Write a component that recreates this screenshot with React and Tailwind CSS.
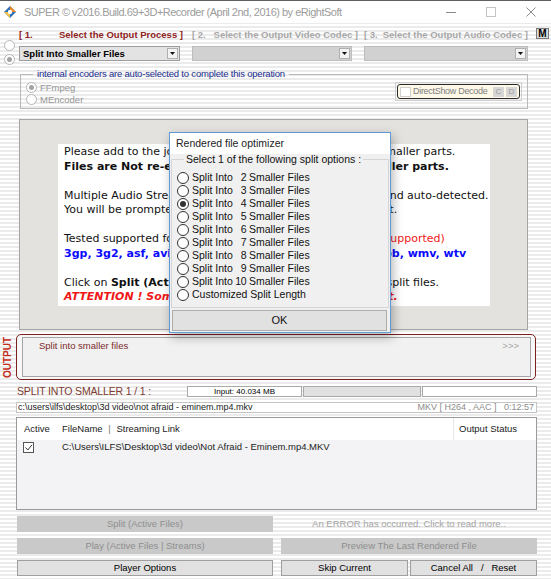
import React from "react";

const stripes =
  "bg-[repeating-linear-gradient(to_bottom,#ffffff_0px,#ffffff_2px,#ebebeb_2px,#ebebeb_4px)]";

const splitOptions = ["2", "3", "4", "5", "6", "7", "8", "9", "10"];

function SmallRadio({ checked }) {
  return (
    <span className="flex h-[11px] w-[11px] shrink-0 items-center justify-center rounded-full border border-[#b4b4b4] bg-white">
      {checked && <span className="h-[5px] w-[5px] rounded-full bg-[#a3a3a3]" />}
    </span>
  );
}

function DlgRadio({ checked }) {
  return (
    <span className="flex h-[12px] w-[12px] shrink-0 items-center justify-center rounded-full border border-[#333333] bg-white">
      {checked && <span className="h-[6px] w-[6px] rounded-full bg-[#333333]" />}
    </span>
  );
}

function Combo({ className, text, disabled }) {
  return (
    <div
      className={`flex h-[15px] items-center justify-between border ${
        disabled ? "border-[#bdbdbd] bg-[#d1d1d1]" : "border-[#9c9c9c] bg-[#e3e3e3]"
      } ${className}`}
    >
      <span className="pl-[3px] text-[9.5px] font-bold leading-none text-black">{text}</span>
      <span className="mr-[1px] flex h-[11px] w-[11px] items-center justify-center border border-[#b0b0b0] bg-[#f3f3f3]">
        <svg width="5" height="3" viewBox="0 0 5 3">
          <path d="M0 0h5L2.5 3z" fill="#111" />
        </svg>
      </span>
    </div>
  );
}

function Btn({ children, className = "", active }) {
  return (
    <div
      className={`flex h-[16px] items-center justify-center whitespace-pre text-[9.5px] ${
        active ? "border border-[#a0a0a0] bg-[#e1e1e1] text-black" : "bg-[#c9c9c9] text-[#8e8e8e]"
      } ${className}`}
    >
      {children}
    </div>
  );
}

export default function App() {
  return (
    <div
      className={`relative h-[579px] w-[551px] overflow-hidden ${stripes} font-['Liberation_Sans',Arial,sans-serif] text-black`}
    >
      {/* title bar */}
      <div className="flex h-[23px] items-center border-t border-[#5f5f5f] bg-white">
        <svg className="ml-[3px]" width="14" height="14" viewBox="0 0 14 14">
          <path d="M7 1L13 7L7 13L1 7Z" fill="#2f6db5" />
          <path d="M7 1L13 7H7Z" fill="#f08a24" />
          <path d="M1 7L7 13V7Z" fill="#f6c344" />
          <circle cx="7" cy="7" r="2.2" fill="#fff" />
        </svg>
        <span className="ml-[7px] whitespace-nowrap text-[11px] tracking-[-0.5px] text-[#9c9c9c]">
          SUPER © v2016.Build.69+3D+Recorder (April 2nd, 2016) by eRightSoft
        </span>
        <div className="ml-auto flex h-full items-center">
          <div className="flex h-full w-[40px] items-center justify-center">
            <svg width="10" height="10" viewBox="0 0 10 10">
              <path d="M0 5.5h10" stroke="#8a8a8a" />
            </svg>
          </div>
          <div className="flex h-full w-[40px] items-center justify-center">
            <svg width="10" height="10" viewBox="0 0 10 10">
              <rect x="0.5" y="0.5" width="9" height="9" fill="none" stroke="#c4c4c4" />
            </svg>
          </div>
          <div className="flex h-full w-[40px] items-center justify-center">
            <svg width="10" height="10" viewBox="0 0 10 10">
              <path d="M0.5 0.5L9.5 9.5M9.5 0.5L0.5 9.5" stroke="#8a8a8a" />
            </svg>
          </div>
        </div>
      </div>

      {/* process / codec selectors */}
      <div className="flex pt-[6px]">
        <div className="flex h-[32px] w-[19px] flex-col items-center gap-[3px] pt-[11px]">
          <SmallRadio />
          <SmallRadio checked />
        </div>
        <div className="flex flex-col">
          <div className="flex h-[11px] items-center whitespace-nowrap text-[9.5px] font-bold leading-none">
            <div className="flex w-[164px] justify-between text-[#8e2323]">
              <span>[ 1.</span>
              <span>Select the Output Process ]</span>
            </div>
            <div className="ml-[9px] flex w-[166px] justify-between text-[#a8a8a8]">
              <span>[ 2.</span>
              <span>Select the Output Video Codec ]</span>
            </div>
            <div className="ml-[6px] flex w-[164px] justify-between text-[#a8a8a8]">
              <span>[ 3.</span>
              <span>Select the Output Audio Codec ]</span>
            </div>
            <div className="-mt-[2px] ml-[8px] flex h-[11px] w-[13px] items-center justify-center border border-[#7a7a7a] bg-[#d9d9d9] text-[10px] text-black">
              M
            </div>
          </div>
          <div className="mt-[6px] flex">
            <Combo className="w-[161px]" text="Split Into Smaller Files" />
            <Combo className="ml-[12px] w-[160px]" disabled />
            <Combo className="ml-[12px] w-[164px]" disabled />
          </div>
        </div>
      </div>

      {/* encoders group */}
      <fieldset className="ml-[20px] mt-[8px] h-[40px] w-[508px] border border-[#b9b9b9] px-[5px]">
        <legend className="ml-[7px] whitespace-nowrap px-[4px] text-[9.5px] leading-[10px] tracking-[-0.2px] text-[#202c8c]">
          internal encoders are auto-selected to complete this operation
        </legend>
        <div className="flex items-start justify-between pt-[3px]">
          <div className="flex flex-col gap-[1px] text-[9.5px] leading-none text-[#979797]">
            <div className="flex h-[11px] items-center gap-[3px]">
              <SmallRadio checked />
              <span>FFmpeg</span>
            </div>
            <div className="flex h-[11px] items-center gap-[3px]">
              <SmallRadio />
              <span>MEncoder</span>
            </div>
          </div>
          <div className="flex h-[19px] w-[127px] border border-[#cfcfcf] p-[1px]">
            <div className="flex flex-1 items-center rounded-[3px] border border-[#2b2b2b] bg-[#fdf8e8] pl-[2px]">
              <span className="h-[10px] w-[11px] border border-[#d0d0d0] bg-white" />
              <span className="ml-[2px] whitespace-nowrap text-[9px] tracking-[-0.3px] text-[#7e7e7e]">
                DirectShow Decode
              </span>
              <span className="ml-auto flex h-[10px] w-[11px] items-center justify-center bg-[#d6d6d6] text-[8px] text-[#9a9a9a]">
                C
              </span>
              <span className="ml-[2px] mr-[2px] flex h-[10px] w-[11px] items-center justify-center bg-[#d6d6d6] text-[8px] text-[#9a9a9a]">
                D
              </span>
            </div>
          </div>
        </div>
      </fieldset>

      {/* info panel */}
      <div className="ml-[19px] mt-[10px] h-[211px] w-[509px] border border-[#a5a5a5] bg-[#e4e2de] pl-[38px] pt-[24px]">
        <div className="h-[162px] w-[432px] overflow-hidden bg-white px-[6px] pt-[1px] font-['DejaVu_Sans',sans-serif] text-[11px] leading-[14.5px] text-[#111]">
          <div className="whitespace-nowrap">
            Please add to the job list the file(s) you want to split into smaller parts.
          </div>
          <div className="whitespace-nowrap font-bold">
            Files are Not re-encoded, they are only cut into smaller parts.
          </div>
          <div className="h-[14.5px]" />
          <div className="whitespace-nowrap">
            Multiple Audio Streams and/or Subtitles are all supported and auto-detected.
          </div>
          <div className="whitespace-nowrap">You will be prompted to select which one to use for the split.</div>
          <div className="h-[14.5px]" />
          <div className="whitespace-nowrap">
            Tested supported formats{" "}
            <span className="text-[#f01818]">(other formats may not be fully supported)</span>
          </div>
          <div className="whitespace-nowrap font-bold text-[#0a0aff]">
            3gp, 3g2, asf, avi, flv, m2ts, mkv, mov, mp4, mpg, vob, wmv, wtv
          </div>
          <div className="h-[14.5px]" />
          <div className="whitespace-nowrap">
            Click on <span className="font-bold">Split (Active Files)</span> to start creating the smaller split
            files.
          </div>
          <div className="whitespace-nowrap font-bold italic text-[#f01818]">
            ATTENTION ! Some formats may not be properly split.
          </div>
        </div>
      </div>

      {/* output */}
      <div className="mt-[4px] flex h-[46px]">
        <div className="flex w-[16px] items-center justify-center">
          <span className="-rotate-90 whitespace-nowrap text-[10px] font-bold text-[#c22f22]">OUTPUT</span>
        </div>
        <div className="flex w-[520px] rounded-[5px] border border-[#7c2020] bg-[#f7f7f7] py-[2px] pl-[5px] pr-[4px]">
          <div className="flex flex-1 items-start justify-between border border-[#a5a5a5] bg-[#f1f1f1] pl-[16px] pr-[11px] pt-[2px] text-[9.5px] leading-[12px]">
            <span className="text-[#7b2b2b]">Split into smaller files</span>
            <span className="text-[#a5a5a5]">&gt;&gt;&gt;</span>
          </div>
        </div>
      </div>

      {/* progress row */}
      <div className="mt-[6px] flex h-[11px] items-center">
        <div className="w-[187px] whitespace-nowrap pl-[17px] text-[10.5px] tracking-[-0.15px] text-[#7d3b31]">
          SPLIT INTO SMALLER 1 / 1 :
        </div>
        <div className="flex h-[11px] w-[115px] items-center justify-center border border-[#a9a9a9] bg-white text-[8px]">
          Input: 40.034 MB
        </div>
        <div className="ml-[1px] h-[11px] w-[118px] border border-[#a9a9a9] bg-[#e1e1e1]" />
        <div className="ml-[1px] h-[11px] w-[115px] border border-[#a9a9a9] bg-white" />
      </div>

      {/* file path */}
      <div className="ml-[16px] mt-[5px] flex h-[11px] w-[521px] items-center justify-between border border-[#c4c4c4] bg-white px-[1px] text-[9px] leading-none">
        <span className="whitespace-nowrap text-[#222]">c:\users\ilfs\desktop\3d video\not afraid - eminem.mp4.mkv</span>
        <span className="whitespace-pre pr-[1px] text-[#8b8b8b]">MKV [ H264 , AAC ]   0:12:57</span>
      </div>

      {/* file list */}
      <div className="ml-[16px] mt-[4px] h-[93px] w-[521px] border border-[#9a9a9a] bg-[#f3f3f5]">
        <div className="flex h-[22px] items-center bg-white text-[9.5px] text-[#222]">
          <div className="w-[45px] pl-[7px]">Active</div>
          <div className="flex-1">
            FileName <span className="px-[3px] text-[#777]">|</span> Streaming Link
          </div>
          <div className="flex h-full w-[83px] items-center border-l border-[#e6e6e6] pl-[5px]">Output Status</div>
        </div>
        <div className="flex h-[14px] items-center text-[9.5px] text-[#222]">
          <div className="w-[45px] pl-[6px]">
            <span className="flex h-[11px] w-[11px] items-center justify-center border border-[#555] bg-white">
              <svg width="9" height="9" viewBox="0 0 9 9">
                <path d="M1.5 4.5L3.8 7L8 1.8" fill="none" stroke="#333" strokeWidth="1" />
              </svg>
            </span>
          </div>
          <div className="whitespace-nowrap">C:\Users\ILFS\Desktop\3d video\Not Afraid - Eminem.mp4.MKV</div>
        </div>
      </div>

      {/* buttons */}
      <div className="mt-[6px] flex">
        <Btn className="ml-[17px] w-[256px]">Split (Active Files)</Btn>
        <div className="ml-[8px] flex h-[16px] w-[256px] items-center justify-center text-[9.5px] text-[#a6a6a6]">
          An ERROR has occurred. Click to read more..
        </div>
      </div>
      <div className="mt-[6px] flex">
        <Btn className="ml-[17px] w-[256px]">Play (Active Files | Streams)</Btn>
        <Btn className="ml-[8px] w-[256px]">Preview The Last Rendered File</Btn>
      </div>
      <div className="mt-[6px] flex">
        <Btn active className="ml-[17px] w-[256px]">
          Player Options
        </Btn>
        <Btn active className="ml-[8px] w-[127px]">
          Skip Current
        </Btn>
        <Btn active className="ml-[2px] w-[127px]">
          {"Cancel All   /   Reset"}
        </Btn>
      </div>

      {/* modal dialog */}
      <div className="absolute left-[169px] top-[132px] flex h-[201px] w-[222px] flex-col border border-[#5e9ad6] bg-[#f0f0f0] shadow-[2px_4px_10px_rgba(0,0,0,0.3)]">
        <div className="flex h-[21px] shrink-0 items-center bg-white pl-[6px] text-[10.5px] text-[#222]">
          Rendered file optimizer
        </div>
        <fieldset className="mx-[1px] h-[154px] border border-[#d5d5d5] pl-[5px]">
          <legend className="ml-[7px] px-[2px] text-[10.5px] leading-[11px] text-[#111]">
            Select 1 of the following split options :
          </legend>
          <div className="flex flex-col pt-[6px] text-[10.5px] leading-[13px] text-[#111]">
            {splitOptions.map((n) => (
              <div key={n} className="flex h-[13px] items-center">
                <DlgRadio checked={n === "4"} />
                <span className="ml-[3px] w-[43px] whitespace-nowrap">Split Into</span>
                <span className="w-[11px] text-right tracking-[-0.5px]">{n}</span>
                <span className="ml-[3px] whitespace-nowrap">Smaller Files</span>
              </div>
            ))}
            <div className="flex h-[13px] items-center">
              <DlgRadio />
              <span className="ml-[3px] whitespace-nowrap">Customized Split Length</span>
            </div>
          </div>
        </fieldset>
        <div className="ml-[2px] mr-[3px] mt-[2px] flex h-[21px] items-center justify-center border border-[#adadad] bg-[#e1e1e1] text-[11px] text-[#111]">
          OK
        </div>
      </div>
    </div>
  );
}
